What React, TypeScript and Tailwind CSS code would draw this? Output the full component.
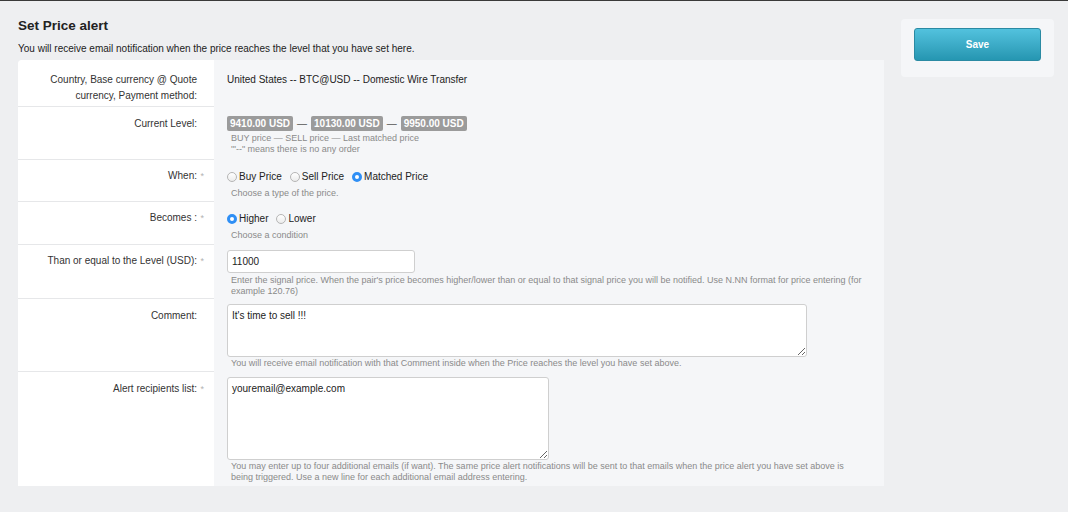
import React from 'react';

const Req = () => (
  <span className="absolute -right-[7px] top-0 text-[9px] text-[#b3b3b3]">*</span>
);

const Row = ({
  label,
  required,
  height,
  labelTop = 'pt-[8px]',
  last,
  children,
}: {
  label: React.ReactNode;
  required?: boolean;
  height: string;
  labelTop?: string;
  last?: boolean;
  children: React.ReactNode;
}) => (
  <div className={`flex ${height}`}>
    <div
      className={`w-[196px] shrink-0 bg-white pr-[17px] ${labelTop} text-right text-[10px] leading-[16px] text-[#333] ${
        last ? '' : 'border-b border-[#e6e7e9]'
      }`}
    >
      <span className="relative inline-block">
        {label}
        {required && <Req />}
      </span>
    </div>
    <div className="flex-1 pl-[13px] pr-[10px]">{children}</div>
  </div>
);

const Help = ({ children }: { children: React.ReactNode }) => (
  <div className="text-[9px] leading-[11px] text-[#8a8a8a]">{children}</div>
);

const Radio = ({ checked, label }: { checked?: boolean; label: string }) => (
  <label className="mr-[8px] inline-flex items-center gap-[2px]">
    <span
      className={`inline-block h-[10px] w-[10px] rounded-full ${
        checked
          ? 'border-[3px] border-[#2f8ff5] bg-white'
          : 'border border-[#b5b5b5] bg-gradient-to-b from-white to-[#ececec]'
      }`}
    />
    <span>{label}</span>
  </label>
);

const Badge = ({ children }: { children: React.ReactNode }) => (
  <span className="inline-block rounded-[2px] bg-[#9b9b9b] px-[3px] text-[10px] font-bold leading-[15px] text-white">
    {children}
  </span>
);

export default function App() {
  return (
    <div
      className="min-h-[512px] w-[1068px] border-t border-[#3a3a3a] bg-[#eeeff1] text-[#333]"
      style={{ fontFamily: '"Liberation Sans", Arial, sans-serif' }}
    >
      <div className="flex gap-[17px] pl-[18px] pr-[14px] pt-[17px]">
        <div className="w-[866px]">
          <h1 className="text-[13.5px] font-bold leading-[16px] text-[#222]">Set Price alert</h1>
          <p className="mt-[9px] text-[10px] leading-[12px] text-[#222]">
            You will receive email notification when the price reaches the level that you have set here.
          </p>
          <div className="mt-[5px] overflow-hidden rounded-tl-[4px] bg-[#f5f6f8] text-[10px]">
            <Row
              label={<>Country, Base currency @ Quote<br />currency, Payment method:</>}
              labelTop="pt-[12px]"
              height="h-[47px]"
            >
              <div className="pt-[12px] leading-[16px] text-[#222]">
                United States -- BTC@USD -- Domestic Wire Transfer
              </div>
            </Row>
            <Row label="Current Level:" labelTop="pt-[9px]" height="h-[53px]">
              <div className="pt-[9px]">
                <div className="flex items-center gap-[4px] text-[#555]">
                  <Badge>9410.00 USD</Badge>
                  <span>—</span>
                  <Badge>10130.00 USD</Badge>
                  <span>—</span>
                  <Badge>9950.00 USD</Badge>
                </div>
                <div className="mt-[2px] pl-[4px]">
                  <Help>BUY price — SELL price — Last matched price</Help>
                  <Help>'"--" means there is no any order</Help>
                </div>
              </div>
            </Row>
            <Row label="When:" required height="h-[42px]">
              <div className="pt-[10px]">
                <div className="leading-[13px] text-[#222]">
                  <Radio label="Buy Price" />
                  <Radio label="Sell Price" />
                  <Radio checked label="Matched Price" />
                </div>
                <div className="mt-[3px] pl-[4px]">
                  <Help>Choose a type of the price.</Help>
                </div>
              </div>
            </Row>
            <Row label="Becomes :" required height="h-[43px]">
              <div className="pt-[10px]">
                <div className="leading-[13px] text-[#222]">
                  <Radio checked label="Higher" />
                  <Radio label="Lower" />
                </div>
                <div className="mt-[3px] pl-[4px]">
                  <Help>Choose a condition</Help>
                </div>
              </div>
            </Row>
            <Row label="Than or equal to the Level (USD):" required height="h-[54px]">
              <div className="pt-[5px]">
                <input
                  className="block h-[23px] w-[188px] rounded-[3px] border border-[#cfcfcf] bg-white px-[4px] text-[10px] text-[#222] outline-none"
                  defaultValue="11000"
                />
                <div className="mt-[2px] pl-[4px] pr-[4px]">
                  <Help>
                    Enter the signal price. When the pair's price becomes higher/lower than or equal to that signal price you will be notified. Use N.NN format for price entering (for example 120.76)
                  </Help>
                </div>
              </div>
            </Row>
            <Row label="Comment:" labelTop="pt-[9px]" height="h-[73px]">
              <div className="pt-[5px]">
                <textarea
                  className="block h-[53px] w-[580px] resize-y rounded-[3px] border border-[#cfcfcf] bg-white px-[4px] pt-[4px] text-[10px] leading-[13px] text-[#222] outline-none"
                  defaultValue="It's time to sell !!!"
                />
                <div className="mt-[1px] pl-[4px]">
                  <Help>You will receive email notification with that Comment inside when the Price reaches the level you have set above.</Help>
                </div>
              </div>
            </Row>
            <Row label="Alert recipients list:" required labelTop="pt-[9px]" height="h-[114px]" last>
              <div className="pt-[5px]">
                <textarea
                  className="block h-[83px] w-[322px] resize-y rounded-[3px] border border-[#cfcfcf] bg-white px-[4px] pt-[4px] text-[10px] leading-[13px] text-[#222] outline-none"
                  defaultValue="youremail@example.com"
                />
                <div className="mt-[1px] pl-[4px] pr-[20px]">
                  <Help>
                    You may enter up to four additional emails (if want). The same price alert notifications will be sent to that emails when the price alert you have set above is being triggered. Use a new line for each additional email address entering.
                  </Help>
                </div>
              </div>
            </Row>
          </div>
        </div>
        <div className="mt-[1px] h-[58px] w-[153px] rounded-[4px] bg-[#f5f6f8] px-[13px] pt-[9px]">
          <button className="h-[33px] w-[127px] rounded-[3px] border border-[#2a8aa3] bg-gradient-to-b from-[#52c2de] to-[#2596b1] text-[10px] font-bold text-white">
            Save
          </button>
        </div>
      </div>
    </div>
  );
}
